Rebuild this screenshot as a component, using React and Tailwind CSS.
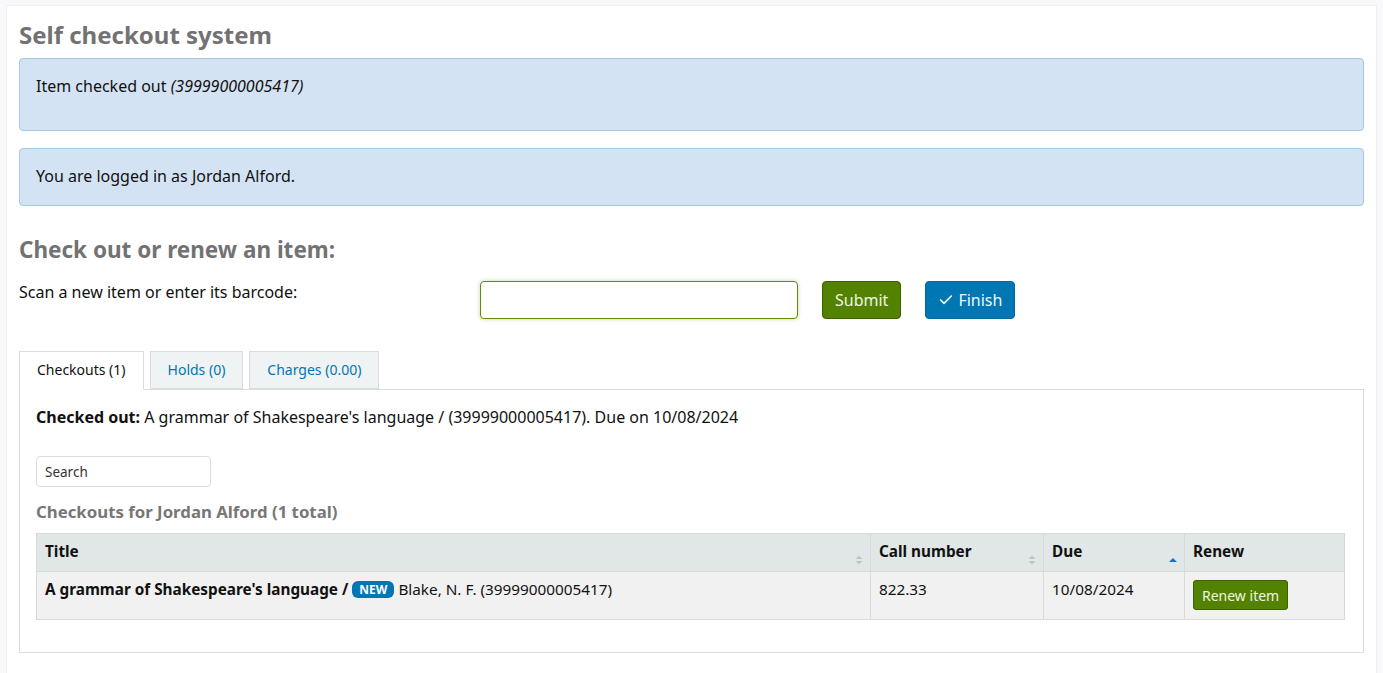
import { Check } from 'lucide-react'

function SortIcon({ active }) {
  if (active) {
    return (
      <svg width="10" height="10" viewBox="0 0 10 10" className="absolute right-[6px] bottom-[6px]">
        <path d="M1 7 L5 3 L9 7 Z" fill="#1a73c7" />
      </svg>
    )
  }
  return (
    <svg width="10" height="12" viewBox="0 0 10 12" className="absolute right-[6px] bottom-[5px]">
      <path d="M1.5 5 L5 1.5 L8.5 5 Z" fill="#c4c4c4" />
      <path d="M1.5 7 L5 10.5 L8.5 7 Z" fill="#c4c4c4" />
    </svg>
  )
}

export default function App() {
  return (
    <div className="min-h-[673px] bg-[#f8f7fa] pt-[5px] px-[6px] text-[16px] text-[#111] font-['Noto_Sans',sans-serif]">
      <div className="bg-white border border-[#eeeef2] px-[12px] pt-[14px] pb-[40px]">
        <h1 className="text-[24px] font-bold text-[#727272] leading-[30px] mb-[8px]">Self checkout system</h1>

        <div className="bg-[#d4e3f3] border border-[#a2cbe3] rounded-[4px] px-[16px] pt-[16px] pb-[32px] leading-[23px]">
          Item checked out <i>(39999000005417)</i>
        </div>

        <div className="mt-[17px] bg-[#d4e3f3] border border-[#a2cbe3] rounded-[4px] px-[16px] pt-[16px] pb-[17px] leading-[23px]">
          You are logged in as Jordan Alford.
        </div>

        <h2 className="mt-[30px] text-[22.5px] font-bold text-[#727272] leading-[28px]">Check out or renew an item:</h2>

        <div className="mt-[17px] flex items-start">
          <label className="w-[461px] leading-[22px]">Scan a new item or enter its barcode:</label>
          <input type="text" className="w-[318px] h-[38px] border border-[#5b8d00] rounded-[4px] shadow-[0_0_4px_rgba(91,141,0,0.35)] outline-none" />
          <button className="ml-[24px] h-[38px] px-[12px] bg-[#538200] border border-[#3e6200] rounded-[4px] text-[16px] text-[#eef5e6]">Submit</button>
          <button className="ml-[24px] h-[38px] px-[12px] bg-[#0076b2] border border-[#0069a0] rounded-[4px] text-[16px] text-[#eef6fb] flex items-center gap-[4px]">
            <Check size={16} strokeWidth={2.5} />Finish
          </button>
        </div>

        <div className="mt-[32px] flex items-end gap-[6px] text-[14px]">
          <div className="h-[39px] pb-[2px] px-[17px] flex items-center bg-white border border-[#dcdcdc] border-b-white -mb-px z-10 relative text-[#111]">Checkouts (1)</div>
          <div className="h-[38px] pb-[2px] px-[17px] flex items-center bg-[#f0f3f3] border border-[#dcdcdc] text-[#0076b2]">Holds (0)</div>
          <div className="h-[38px] pb-[2px] px-[17px] flex items-center bg-[#f0f3f3] border border-[#dcdcdc] text-[#0076b2]">Charges (0.00)</div>
        </div>

        <div className="border border-[#dcdcdc] px-[16px] pt-[15px] pb-[32px]">
          <p className="leading-[24px]"><b>Checked out:</b> A grammar of Shakespeare's language / (39999000005417). Due on 10/08/2024</p>

          <input type="text" placeholder="Search" className="mt-[27px] block w-[175px] h-[31px] border border-[#dcdcdc] rounded-[4px] px-[8px] text-[13.5px] placeholder-[#333] outline-none" />

          <h3 className="mt-[13px] text-[16.8px] font-bold text-[#777] leading-[24px]">Checkouts for Jordan Alford (1 total)</h3>

          <table className="mt-[9px] w-[1309px] border-collapse border border-[#d9d9d9] text-[15.3px]">
            <thead>
              <tr className="bg-[#e1e7e7] text-left">
                <th className="relative h-[38px] px-[8px] pb-[2px] border border-[#d9d9d9] w-[834px] align-middle">Title<SortIcon /></th>
                <th className="relative px-[8px] pb-[2px] border border-[#d9d9d9] w-[173px] align-middle">Call number<SortIcon /></th>
                <th className="relative px-[8px] pb-[2px] border border-[#d9d9d9] w-[141px] align-middle">Due<SortIcon active /></th>
                <th className="px-[8px] pb-[2px] border border-[#d9d9d9] align-middle">Renew</th>
              </tr>
            </thead>
            <tbody>
              <tr className="bg-[#f1f1f1] align-top">
                <td className="h-[48px] px-[8px] pt-[5px] border border-[#d9d9d9] leading-[24px]">
                  <b>A grammar of Shakespeare's language / </b>
                  <span className="inline-block align-[1px] bg-[#0076b2] text-white text-[12px] font-bold rounded-[6px] px-[7px] leading-[17px]">NEW</span>
                  {' '}Blake, N. F. (39999000005417)
                </td>
                <td className="px-[8px] pt-[5px] border border-[#d9d9d9] leading-[24px]">822.33</td>
                <td className="px-[8px] pt-[5px] border border-[#d9d9d9] leading-[24px]">10/08/2024</td>
                <td className="px-[8px] pt-[8px] border border-[#d9d9d9]">
                  <button className="h-[30px] px-[8px] bg-[#538200] border border-[#3e6200] rounded-[3px] text-[14px] text-[#eef5e6]">Renew item</button>
                </td>
              </tr>
            </tbody>
          </table>
        </div>
      </div>
    </div>
  )
}
